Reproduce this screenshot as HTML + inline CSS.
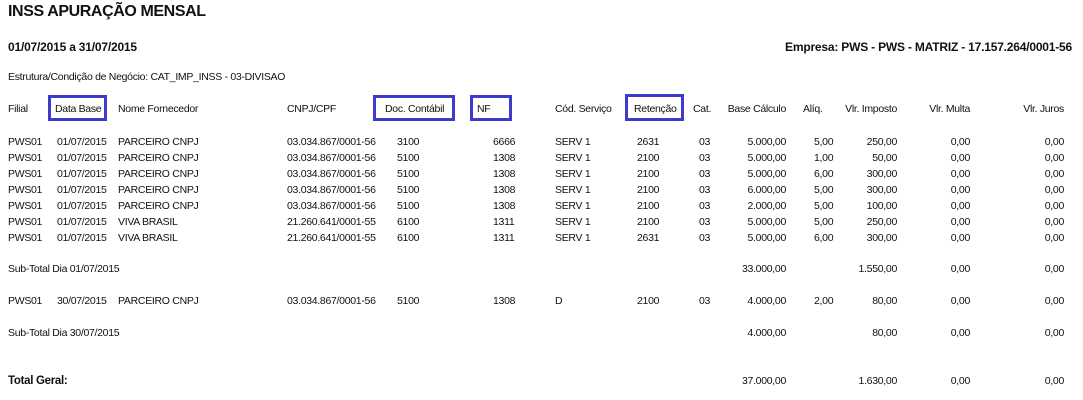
<!DOCTYPE html>
<html><head><meta charset="utf-8"><style>
body{margin:0;width:1083px;height:400px;background:#fff;position:relative;overflow:hidden;font-family:"Liberation Sans",sans-serif;color:#111;font-size:10.5px;letter-spacing:-0.3px}
div{position:absolute;white-space:nowrap;line-height:14px}
.r{text-align:right}
.b{font-weight:bold}
.box{border:3px solid #3b3bcc;box-sizing:border-box}
</style></head><body>
<div class="b" style="left:8px;top:2px;font-size:16px;line-height:20px;letter-spacing:-0.4px">INSS APURAÇÃO MENSAL</div>
<div class="b" style="left:8px;top:40px;font-size:12px;letter-spacing:-0.2px">01/07/2015 a 31/07/2015</div>
<div class="b" style="right:11px;top:40px;font-size:12px;letter-spacing:-0.2px">Empresa: PWS - PWS - MATRIZ - 17.157.264/0001-56</div>
<div style="left:8px;top:70px">Estrutura/Condição de Negócio: CAT_IMP_INSS - 03-DIVISAO</div>

<div class="box" style="left:48px;top:95px;width:59px;height:26px"></div>
<div class="box" style="left:373px;top:95px;width:82px;height:26px"></div>
<div class="box" style="left:470px;top:95px;width:42px;height:26px"></div>
<div class="box" style="left:625px;top:94px;width:59px;height:27px"></div>

<div style="left:8px;top:102px">Filial</div>
<div style="left:55px;top:102px">Data Base</div>
<div style="left:118px;top:102px">Nome Fornecedor</div>
<div style="left:287px;top:102px">CNPJ/CPF</div>
<div style="left:385px;top:102px">Doc. Contábil</div>
<div style="left:477px;top:102px">NF</div>
<div style="left:555px;top:102px">Cód. Serviço</div>
<div style="left:634px;top:102px">Retenção</div>
<div style="left:693px;top:102px">Cat.</div>
<div class="r" style="right:297px;top:102px">Base Cálculo</div>
<div style="left:803px;top:102px">Alíq.</div>
<div class="r" style="right:186px;top:102px">Vlr. Imposto</div>
<div class="r" style="right:113px;top:102px">Vlr. Multa</div>
<div class="r" style="right:19px;top:102px">Vlr. Juros</div>

<div style="left:8px;top:134px;line-height:16px">PWS01<br>PWS01<br>PWS01<br>PWS01<br>PWS01<br>PWS01<br>PWS01</div>
<div style="left:57px;top:134px;line-height:16px">01/07/2015<br>01/07/2015<br>01/07/2015<br>01/07/2015<br>01/07/2015<br>01/07/2015<br>01/07/2015</div>
<div style="left:118px;top:134px;line-height:16px">PARCEIRO CNPJ<br>PARCEIRO CNPJ<br>PARCEIRO CNPJ<br>PARCEIRO CNPJ<br>PARCEIRO CNPJ<br>VIVA BRASIL<br>VIVA BRASIL</div>
<div style="left:287px;top:134px;line-height:16px">03.034.867/0001-56<br>03.034.867/0001-56<br>03.034.867/0001-56<br>03.034.867/0001-56<br>03.034.867/0001-56<br>21.260.641/0001-55<br>21.260.641/0001-55</div>
<div style="left:397px;top:134px;line-height:16px">3100<br>5100<br>5100<br>5100<br>5100<br>6100<br>6100</div>
<div style="left:493px;top:134px;line-height:16px">6666<br>1308<br>1308<br>1308<br>1308<br>1311<br>1311</div>
<div style="left:555px;top:134px;line-height:16px">SERV 1<br>SERV 1<br>SERV 1<br>SERV 1<br>SERV 1<br>SERV 1<br>SERV 1</div>
<div style="left:637px;top:134px;line-height:16px">2631<br>2100<br>2100<br>2100<br>2100<br>2100<br>2631</div>
<div style="left:699px;top:134px;line-height:16px">03<br>03<br>03<br>03<br>03<br>03<br>03</div>
<div class="r" style="right:297px;top:134px;line-height:16px">5.000,00<br>5.000,00<br>5.000,00<br>6.000,00<br>2.000,00<br>5.000,00<br>5.000,00</div>
<div style="left:814px;top:134px;line-height:16px">5,00<br>1,00<br>6,00<br>5,00<br>5,00<br>5,00<br>6,00</div>
<div class="r" style="right:186px;top:134px;line-height:16px">250,00<br>50,00<br>300,00<br>300,00<br>100,00<br>250,00<br>300,00</div>
<div class="r" style="right:113px;top:134px;line-height:16px">0,00<br>0,00<br>0,00<br>0,00<br>0,00<br>0,00<br>0,00</div>
<div class="r" style="right:19px;top:134px;line-height:16px">0,00<br>0,00<br>0,00<br>0,00<br>0,00<br>0,00<br>0,00</div>

<div style="left:8px;top:262px">Sub-Total Dia 01/07/2015</div>
<div class="r" style="right:297px;top:262px">33.000,00</div>
<div class="r" style="right:186px;top:262px">1.550,00</div>
<div class="r" style="right:113px;top:262px">0,00</div>
<div class="r" style="right:19px;top:262px">0,00</div>

<div style="left:8px;top:294px">PWS01</div>
<div style="left:57px;top:294px">30/07/2015</div>
<div style="left:118px;top:294px">PARCEIRO CNPJ</div>
<div style="left:287px;top:294px">03.034.867/0001-56</div>
<div style="left:397px;top:294px">5100</div>
<div style="left:493px;top:294px">1308</div>
<div style="left:555px;top:294px">D</div>
<div style="left:637px;top:294px">2100</div>
<div style="left:699px;top:294px">03</div>
<div class="r" style="right:297px;top:294px">4.000,00</div>
<div style="left:814px;top:294px">2,00</div>
<div class="r" style="right:186px;top:294px">80,00</div>
<div class="r" style="right:113px;top:294px">0,00</div>
<div class="r" style="right:19px;top:294px">0,00</div>

<div style="left:8px;top:326px">Sub-Total Dia 30/07/2015</div>
<div class="r" style="right:297px;top:326px">4.000,00</div>
<div class="r" style="right:186px;top:326px">80,00</div>
<div class="r" style="right:113px;top:326px">0,00</div>
<div class="r" style="right:19px;top:326px">0,00</div>

<div class="b" style="left:8px;top:374px;font-size:11.5px">Total Geral:</div>
<div class="r" style="right:297px;top:374px">37.000,00</div>
<div class="r" style="right:186px;top:374px">1.630,00</div>
<div class="r" style="right:113px;top:374px">0,00</div>
<div class="r" style="right:19px;top:374px">0,00</div>
</body></html>
